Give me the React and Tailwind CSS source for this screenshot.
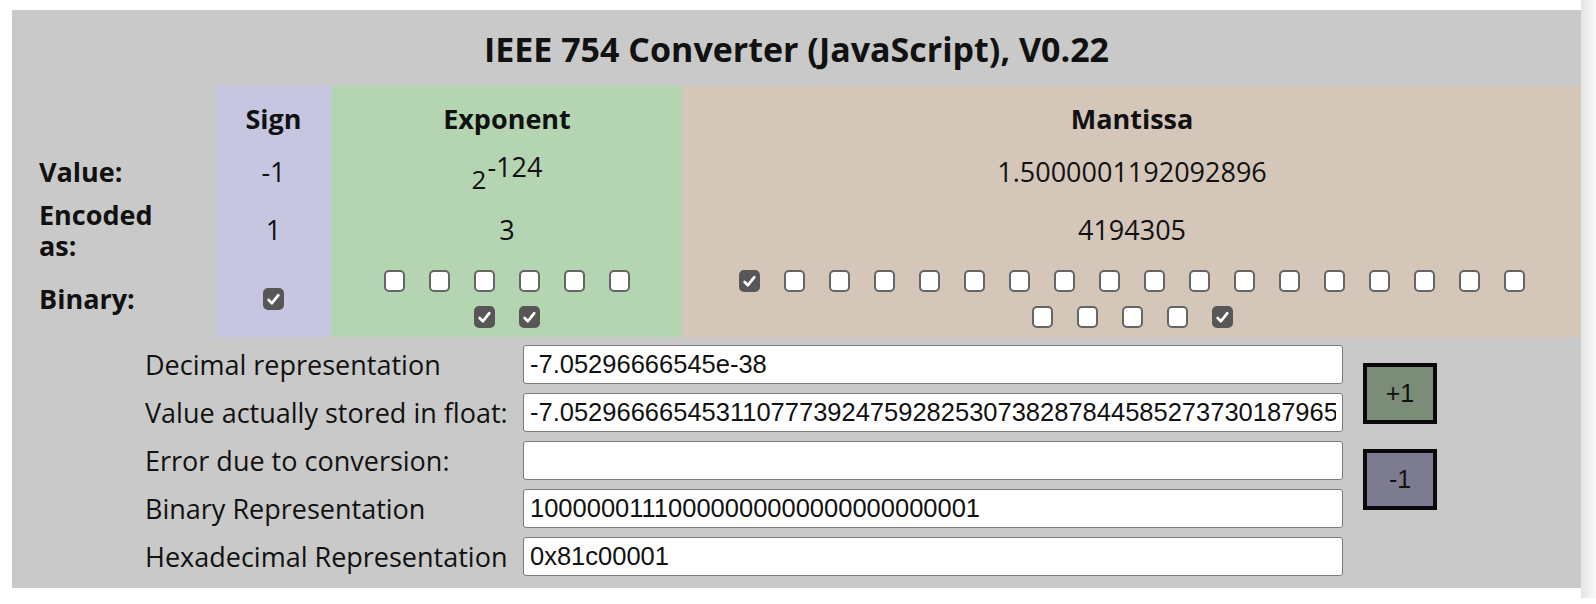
import React from 'react';

const Box = ({ on }) => (
  <span
    className={
      'mx-[12px] my-[7px] flex h-[22px] w-[21px] shrink-0 items-center justify-center rounded-[5px] border-2 ' +
      (on ? 'border-[#575757] bg-[#575757]' : 'border-[#656565] bg-white')
    }
  >
    {on && (
      <svg width="15" height="15" viewBox="0 0 14 14" fill="none">
        <path d="M2.5 7.5 L5.5 10.5 L11.5 3" stroke="white" strokeWidth="2.6" strokeLinecap="round" strokeLinejoin="round" />
      </svg>
    )}
  </span>
);

const Bits = ({ bits, width }) => (
  <div className={'flex flex-wrap justify-center ' + width}>
    {bits.map((b, i) => (
      <Box key={i} on={b} />
    ))}
  </div>
);

const expBits = [0, 0, 0, 0, 0, 0, 1, 1].map(Boolean);
const manBits = Array.from({ length: 23 }, (_, i) => i === 0 || i === 22);

const fields = [
  ['Decimal representation', '-7.05296666545e-38'],
  ['Value actually stored in float:', '-7.0529666654531107773924759282530738287844585273730187965'],
  ['Error due to conversion:', ''],
  ['Binary Representation', '10000001110000000000000000000001'],
  ['Hexadecimal Representation', '0x81c00001'],
];

export default function App() {
  return (
    <div className="flex h-[604px] w-[1596px] bg-white pt-[10px] pl-[12px] font-['Open_Sans',sans-serif] text-[#111]">
      <div className="flex h-[578px] w-[1569px] flex-col bg-[#c9c9c9]">
        <h1 className="flex h-[76px] items-center justify-center pt-[2px] text-[34px] font-bold">
          IEEE 754 Converter (JavaScript), V0.22
        </h1>

        <div className="grid grid-cols-[204px_115px_352px_1fr] grid-rows-[60px_53px_62px_76px] text-[27px]">
          <div />
          <div className="flex items-center justify-center bg-[#c6c6e1] pt-[6px] font-bold">Sign</div>
          <div className="flex items-center justify-center bg-[#b5d5b2] pt-[6px] font-bold">Exponent</div>
          <div className="flex items-center justify-center bg-[#d4c6b9] pt-[6px] font-bold">Mantissa</div>

          <div className="flex items-center pl-[27px] font-bold">Value:</div>
          <div className="flex items-center justify-center bg-[#c6c6e1]">-1</div>
          <div className="flex items-center justify-center bg-[#b5d5b2]">
            <span className="relative top-[7px] text-[26px]">2</span>
            <span className="relative top-[-5px] pl-[1px]">-124</span>
          </div>
          <div className="flex items-center justify-center bg-[#d4c6b9]">1.5000001192092896</div>

          <div className="flex flex-col justify-center pl-[27px] font-bold leading-[31px]">
            <span>Encoded</span>
            <span>as:</span>
          </div>
          <div className="flex items-center justify-center bg-[#c6c6e1]">1</div>
          <div className="flex items-center justify-center bg-[#b5d5b2]">3</div>
          <div className="flex items-center justify-center bg-[#d4c6b9]">4194305</div>

          <div className="flex items-center pl-[27px] font-bold">Binary:</div>
          <div className="flex items-center justify-center bg-[#c6c6e1]">
            <Box on />
          </div>
          <div className="flex items-center justify-center bg-[#b5d5b2]">
            <Bits bits={expBits} width="w-[270px]" />
          </div>
          <div className="flex items-center justify-center bg-[#d4c6b9]">
            <Bits bits={manBits} width="w-[810px]" />
          </div>
        </div>

        <div className="mt-[8px] flex pl-[133px]">
          <div className="flex flex-col gap-[9px]">
            {fields.map(([label, value]) => (
              <div key={label} className="flex items-center">
                <span className="w-[378px] text-[27px] leading-none">{label}</span>
                <input
                  readOnly
                  value={value}
                  className="h-[39px] w-[820px] rounded-[3px] border border-[#7c7c7c] bg-white px-[6px] font-['Liberation_Sans',Arial,sans-serif] text-[25.5px] text-[#111] outline-none"
                />
              </div>
            ))}
          </div>
          <div className="ml-[20px] mt-[18px] flex flex-col gap-[25px] font-['Liberation_Sans',Arial,sans-serif] text-[25px]">
            <button className="h-[61px] w-[74px] border-4 border-[#0a0a0a] bg-[#7b8c78] text-[#111]">+1</button>
            <button className="h-[61px] w-[74px] border-4 border-[#0a0a0a] bg-[#7c7b90] text-[#111]">-1</button>
          </div>
        </div>
      </div>
      <div className="mt-[-10px] h-[598px] w-[15px] bg-gradient-to-r from-[#e4e4e4] to-[#f9f9f9]" />
    </div>
  );
}
